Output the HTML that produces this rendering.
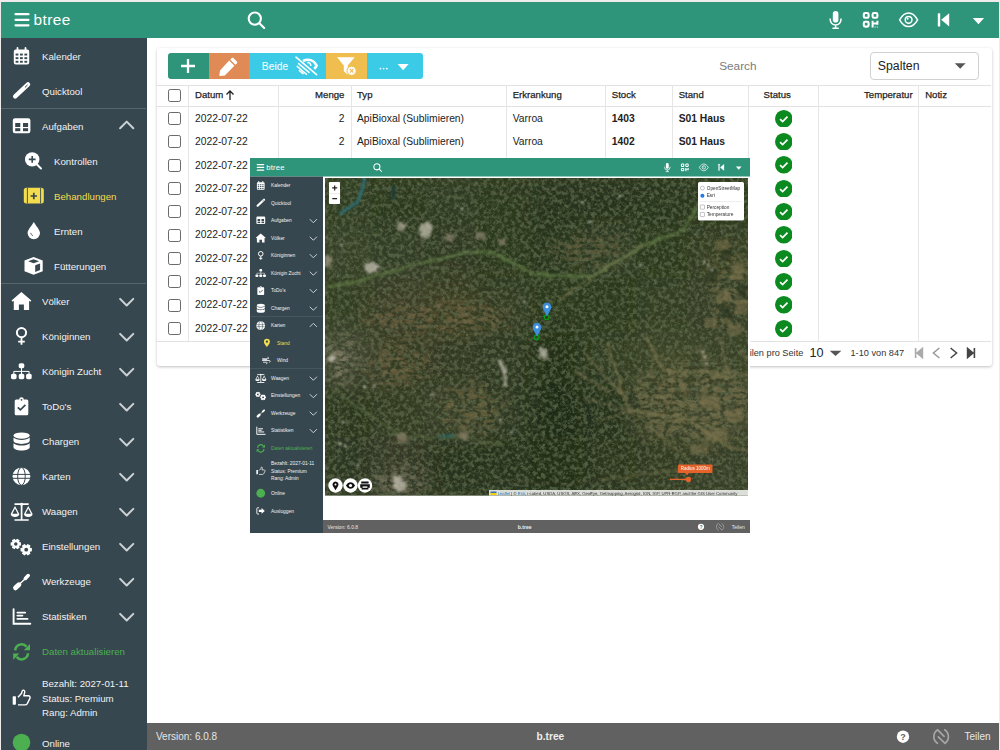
<!DOCTYPE html>
<html><head><meta charset="utf-8">
<style>
*{box-sizing:border-box}
html,body{margin:0;padding:0}
body{width:1000px;height:750px;overflow:hidden;background:#efebeb;position:relative;font-family:"Liberation Sans",sans-serif}
.app{position:absolute;overflow:hidden;background:#fff}
.top{position:absolute;left:0;top:0;width:100%;background:#2e957b}
.side{position:absolute;left:0;background:#37474f;overflow:hidden}
.ssvg{position:absolute;left:0;top:0}
.sl{position:absolute;font-size:9.7px;line-height:14px;white-space:nowrap}
.sdiv{position:absolute;left:0;width:100%;height:1px;background:#56666d}
.tsvg{position:absolute;left:0;top:0}
.brand{position:absolute;left:33.4px;top:11.3px;font-size:15.4px;letter-spacing:.45px;color:#fff;line-height:18px}
.foot{position:absolute;left:146px;right:0;background:#616161;color:#eee}
.card{position:absolute;left:155.5px;top:46.5px;width:835px;height:318px;background:#fff;border-radius:3px;box-shadow:0 1px 3px rgba(0,0,0,.25)}
.hl{position:absolute;left:156px;width:834.5px;height:1px;background:#e2e2e2}
.vl{position:absolute;top:85px;width:1px;height:256px;background:#e6e6e6}
.cb{position:absolute;width:13px;height:13px;border:1.6px solid #6a6a6a;border-radius:2.2px}
.th{position:absolute;font-size:9.6px;line-height:12px;color:#1e1e1e;white-space:nowrap;-webkit-text-stroke:.25px #1e1e1e}
.td{position:absolute;font-size:10.3px;line-height:13px;color:#222;white-space:nowrap}
.td.b{font-weight:bold}
.btn{position:absolute;top:52.8px;height:26px}
.bt{position:absolute;font-size:10.3px;color:#fff;line-height:12px}
.pg{position:absolute;font-size:9.2px;color:#333;line-height:12px;white-space:nowrap}
.map{position:absolute;left:0;top:0;width:1000px;height:750px}
.lc{position:absolute;font-size:9.5px;line-height:12px;color:#333;white-space:nowrap}
</style></head><body>
<div class="app" style="left:1px;top:1.5px;width:998px;height:748.5px">
  <div class="card"></div>
</div>
<div style="position:absolute;left:0;top:0;width:1000px;height:750px">
  <div class="btn" style="left:167.8px;width:40.9px;background:#2e957b;border-radius:3px 0 0 3px"></div><div class="btn" style="left:208.7px;width:40.5px;background:#e08b55"></div><div class="btn" style="left:249.2px;width:77px;background:#3ccbe7"></div><div class="btn" style="left:326.2px;width:40.9px;background:#f0bd4f"></div><div class="btn" style="left:367.1px;width:55.8px;background:#3ccbe7;border-radius:0 3px 3px 0"></div><svg style="position:absolute;left:0;top:0" width="1000" height="90" viewBox="0 0 1000 90"><path d="M188 59v14M181 66h14" stroke="#fff" stroke-width="2.3"/><path fill="#fff" d="M233.6 58.2l3.2 3.2c.6.6.6 1.4 0 2l-1.4 1.4-5.2-5.2 1.4-1.4c.6-.6 1.4-.6 2 0zM229.2 60.6l5.2 5.2-9.6 9.6-4.8.6c-.4 0-.6-.2-.6-.6l.6-4.8z"/><path d="M296 57.2l20.6 17.4" stroke="#fff" stroke-width="1.6" stroke-linecap="round"/><path d="M303 61c1.5-.8 3.2-1.2 5-1.2 3.6 0 6.8 2.2 8.6 5.8-.6 1.3-1.4 2.4-2.4 3.3" stroke="#fff" stroke-width="2.6" fill="none"/><path d="M307.4 62.6a3 3 0 0 1 3.4 3.4" stroke="#fff" stroke-width="1.6" fill="none"/><path d="M298.6 63.6l10.4 8.8M297.2 66.4l9.2 7.8M299.4 70.6l3.6 3" stroke="#fff" stroke-width="1.5" stroke-linecap="round"/><path fill="#fff" d="M337 57.2h17.6l-6.8 8.2v9.4l-4-3.5v-5.9z"/><circle cx="351.6" cy="70.8" r="4.6" fill="#fff" stroke="#f0bd4f" stroke-width="1"/><path d="M349.8 69l3.6 3.6M353.4 69l-3.6 3.6" stroke="#f0bd4f" stroke-width="1.1"/><circle cx="380.4" cy="68.6" r=".9" fill="#fff"/><circle cx="383.6" cy="68.6" r=".9" fill="#fff"/><circle cx="386.8" cy="68.6" r=".9" fill="#fff"/><path fill="#fff" d="M397.6 63.9h11l-5.5 6.4z"/></svg><div class="bt" style="left:261.8px;top:60.5px">Beide</div><div style="position:absolute;left:719.2px;top:58.5px;font-size:11.8px;color:#7a7a7a">Search</div><div style="position:absolute;left:869.6px;top:51.5px;width:109px;height:28.5px;border:1px solid #d0d0d0;border-radius:4px"></div><div style="position:absolute;left:877.8px;top:59px;font-size:12.3px;color:#222">Spalten</div><svg style="position:absolute;left:0;top:0" width="1000" height="90"><path fill="#555" d="M954.8 63.2h10.8l-5.4 5.6z"/></svg>
  <div class="hl" style="top:85px"></div><div class="hl" style="top:106px"></div><div class="hl" style="top:340.5px"></div><div class="vl" style="left:188px"></div><div class="vl" style="left:278px"></div><div class="vl" style="left:351px"></div><div class="vl" style="left:506px"></div><div class="vl" style="left:605px"></div><div class="vl" style="left:672px"></div><div class="vl" style="left:748px"></div><div class="vl" style="left:818px"></div><div class="vl" style="left:918px"></div><div class="cb" style="left:168.4px;top:89.4px"></div><div class="th" style="left:195px;top:89px">Datum</div><div class="th" style="right:655.6px;top:89px">Menge</div><div class="th" style="left:357px;top:89px">Typ</div><div class="th" style="left:512.7px;top:89px">Erkrankung</div><div class="th" style="left:611.8px;top:89px">Stock</div><div class="th" style="left:678.7px;top:89px">Stand</div><div class="th" style="left:737.2px;width:80px;text-align:center;top:89px">Status</div><div class="th" style="right:87.39999999999998px;top:89px">Temperatur</div><div class="th" style="left:925.2px;top:89px">Notiz</div><svg style="position:absolute;left:224.5px;top:89px" width="10" height="12" viewBox="0 0 10 12"><path d="M5 2v9M1.5 5.5L5 2l3.5 3.5" stroke="#222" stroke-width="1.3" fill="none"/></svg><div class="cb" style="left:168.4px;top:112.1px"></div><div class="td" style="left:195px;top:111.8px">2022-07-22</div><div class="td" style="right:655.6px;top:111.8px">2</div><div class="td" style="left:357px;top:111.8px">ApiBioxal (Sublimieren)</div><div class="td" style="left:512.7px;top:111.8px">Varroa</div><div class="td b" style="left:611.8px;top:111.8px">1403</div><div class="td b" style="left:678.7px;top:111.8px">S01 Haus</div><svg style="position:absolute;left:774.8px;top:109.5px" width="17.6" height="17.6" viewBox="0 0 18 18"><circle cx="9" cy="9" r="9" fill="#0b8a1f"/><path d="M5.2 9.3l2.6 2.5 5-5" stroke="#fff" stroke-width="1.8" fill="none"/></svg><div class="cb" style="left:168.4px;top:135.4px"></div><div class="td" style="left:195px;top:135.1px">2022-07-22</div><div class="td" style="right:655.6px;top:135.1px">2</div><div class="td" style="left:357px;top:135.1px">ApiBioxal (Sublimieren)</div><div class="td" style="left:512.7px;top:135.1px">Varroa</div><div class="td b" style="left:611.8px;top:135.1px">1402</div><div class="td b" style="left:678.7px;top:135.1px">S01 Haus</div><svg style="position:absolute;left:774.8px;top:132.8px" width="17.6" height="17.6" viewBox="0 0 18 18"><circle cx="9" cy="9" r="9" fill="#0b8a1f"/><path d="M5.2 9.3l2.6 2.5 5-5" stroke="#fff" stroke-width="1.8" fill="none"/></svg><div class="cb" style="left:168.4px;top:158.8px"></div><div class="td" style="left:195px;top:158.5px">2022-07-22</div><div class="td" style="right:655.6px;top:158.5px">2</div><div class="td" style="left:357px;top:158.5px">ApiBioxal (Sublimieren)</div><div class="td" style="left:512.7px;top:158.5px">Varroa</div><div class="td b" style="left:611.8px;top:158.5px">1401</div><div class="td b" style="left:678.7px;top:158.5px">S01 Haus</div><svg style="position:absolute;left:774.8px;top:156.2px" width="17.6" height="17.6" viewBox="0 0 18 18"><circle cx="9" cy="9" r="9" fill="#0b8a1f"/><path d="M5.2 9.3l2.6 2.5 5-5" stroke="#fff" stroke-width="1.8" fill="none"/></svg><div class="cb" style="left:168.4px;top:182.1px"></div><div class="td" style="left:195px;top:181.8px">2022-07-22</div><div class="td" style="right:655.6px;top:181.8px">2</div><div class="td" style="left:357px;top:181.8px">ApiBioxal (Sublimieren)</div><div class="td" style="left:512.7px;top:181.8px">Varroa</div><div class="td b" style="left:611.8px;top:181.8px">1400</div><div class="td b" style="left:678.7px;top:181.8px">S01 Haus</div><svg style="position:absolute;left:774.8px;top:179.5px" width="17.6" height="17.6" viewBox="0 0 18 18"><circle cx="9" cy="9" r="9" fill="#0b8a1f"/><path d="M5.2 9.3l2.6 2.5 5-5" stroke="#fff" stroke-width="1.8" fill="none"/></svg><div class="cb" style="left:168.4px;top:205.4px"></div><div class="td" style="left:195px;top:205.1px">2022-07-22</div><div class="td" style="right:655.6px;top:205.1px">2</div><div class="td" style="left:357px;top:205.1px">ApiBioxal (Sublimieren)</div><div class="td" style="left:512.7px;top:205.1px">Varroa</div><div class="td b" style="left:611.8px;top:205.1px">1399</div><div class="td b" style="left:678.7px;top:205.1px">S01 Haus</div><svg style="position:absolute;left:774.8px;top:202.8px" width="17.6" height="17.6" viewBox="0 0 18 18"><circle cx="9" cy="9" r="9" fill="#0b8a1f"/><path d="M5.2 9.3l2.6 2.5 5-5" stroke="#fff" stroke-width="1.8" fill="none"/></svg><div class="cb" style="left:168.4px;top:228.8px"></div><div class="td" style="left:195px;top:228.4px">2022-07-22</div><div class="td" style="right:655.6px;top:228.4px">2</div><div class="td" style="left:357px;top:228.4px">ApiBioxal (Sublimieren)</div><div class="td" style="left:512.7px;top:228.4px">Varroa</div><div class="td b" style="left:611.8px;top:228.4px">1398</div><div class="td b" style="left:678.7px;top:228.4px">S01 Haus</div><svg style="position:absolute;left:774.8px;top:226.1px" width="17.6" height="17.6" viewBox="0 0 18 18"><circle cx="9" cy="9" r="9" fill="#0b8a1f"/><path d="M5.2 9.3l2.6 2.5 5-5" stroke="#fff" stroke-width="1.8" fill="none"/></svg><div class="cb" style="left:168.4px;top:252.1px"></div><div class="td" style="left:195px;top:251.8px">2022-07-22</div><div class="td" style="right:655.6px;top:251.8px">2</div><div class="td" style="left:357px;top:251.8px">ApiBioxal (Sublimieren)</div><div class="td" style="left:512.7px;top:251.8px">Varroa</div><div class="td b" style="left:611.8px;top:251.8px">1397</div><div class="td b" style="left:678.7px;top:251.8px">S01 Haus</div><svg style="position:absolute;left:774.8px;top:249.5px" width="17.6" height="17.6" viewBox="0 0 18 18"><circle cx="9" cy="9" r="9" fill="#0b8a1f"/><path d="M5.2 9.3l2.6 2.5 5-5" stroke="#fff" stroke-width="1.8" fill="none"/></svg><div class="cb" style="left:168.4px;top:275.4px"></div><div class="td" style="left:195px;top:275.1px">2022-07-22</div><div class="td" style="right:655.6px;top:275.1px">2</div><div class="td" style="left:357px;top:275.1px">ApiBioxal (Sublimieren)</div><div class="td" style="left:512.7px;top:275.1px">Varroa</div><div class="td b" style="left:611.8px;top:275.1px">1396</div><div class="td b" style="left:678.7px;top:275.1px">S01 Haus</div><svg style="position:absolute;left:774.8px;top:272.8px" width="17.6" height="17.6" viewBox="0 0 18 18"><circle cx="9" cy="9" r="9" fill="#0b8a1f"/><path d="M5.2 9.3l2.6 2.5 5-5" stroke="#fff" stroke-width="1.8" fill="none"/></svg><div class="cb" style="left:168.4px;top:298.7px"></div><div class="td" style="left:195px;top:298.4px">2022-07-22</div><div class="td" style="right:655.6px;top:298.4px">2</div><div class="td" style="left:357px;top:298.4px">ApiBioxal (Sublimieren)</div><div class="td" style="left:512.7px;top:298.4px">Varroa</div><div class="td b" style="left:611.8px;top:298.4px">1395</div><div class="td b" style="left:678.7px;top:298.4px">S01 Haus</div><svg style="position:absolute;left:774.8px;top:296.1px" width="17.6" height="17.6" viewBox="0 0 18 18"><circle cx="9" cy="9" r="9" fill="#0b8a1f"/><path d="M5.2 9.3l2.6 2.5 5-5" stroke="#fff" stroke-width="1.8" fill="none"/></svg><div class="cb" style="left:168.4px;top:322.1px"></div><div class="td" style="left:195px;top:321.8px">2022-07-22</div><div class="td" style="right:655.6px;top:321.8px">2</div><div class="td" style="left:357px;top:321.8px">ApiBioxal (Sublimieren)</div><div class="td" style="left:512.7px;top:321.8px">Varroa</div><div class="td b" style="left:611.8px;top:321.8px">1394</div><div class="td b" style="left:678.7px;top:321.8px">S01 Haus</div><svg style="position:absolute;left:774.8px;top:319.5px" width="17.6" height="17.6" viewBox="0 0 18 18"><circle cx="9" cy="9" r="9" fill="#0b8a1f"/><path d="M5.2 9.3l2.6 2.5 5-5" stroke="#fff" stroke-width="1.8" fill="none"/></svg>
  <div class="pg" style="right:196.7px;top:347px">Zeilen pro Seite</div><div style="position:absolute;left:809.6px;top:345.6px;font-size:12.6px;color:#222;line-height:15px">10</div><svg style="position:absolute;left:0;top:330px" width="1000" height="40" viewBox="0 330 1000 40"><path fill="#555" d="M829.7 350.8h11.7l-5.85 5.2z"/><path d="M915.6 348v10M922.4 348.4v9.2l-5.4-4.6z" stroke="#aaa" stroke-width="1.6" fill="#aaa"/><path d="M939.4 348l-6 5 6 5" stroke="#999" stroke-width="1.5" fill="none"/><path d="M950.6 348l6 5-6 5" stroke="#444" stroke-width="1.5" fill="none"/><path d="M974.4 348v10M967.6 348.4v9.2l5.4-4.6z" stroke="#444" stroke-width="1.6" fill="#444"/></svg><div class="pg" style="left:850.5px;top:347px">1-10 von 847</div>
</div>
<div class="top" style="left:1px;top:1.5px;width:998px;height:36.5px"></div>
<div style="position:absolute;left:0;top:0;width:1000px;height:40px"><svg class="tsvg" width="1000" height="40" viewBox="0 0 1000 40"><path d="M15.5 14.2h13M15.5 19.8h13M15.5 25.3h13" stroke="#fff" stroke-width="2.2" stroke-linecap="round"/><circle cx="254.8" cy="18.6" r="6.1" stroke="#fff" stroke-width="2.1" fill="none"/><path d="M259.4 23.2l4.8 4.8" stroke="#fff" stroke-width="2.1" stroke-linecap="round"/><rect x="832.8" y="11" width="5.6" height="11.6" rx="2.8" fill="#fff"/><path d="M830.2 18.4v1.2a5.4 5.4 0 0 0 10.8 0v-1.2M835.6 25v2.8M832.4 28.2h6.4" stroke="#fff" stroke-width="1.5" fill="none"/><rect x="863.8" y="13" width="4.8" height="4.8" rx="1.4" stroke="#fff" stroke-width="2.1" fill="none"/><rect x="872.6" y="13" width="4.8" height="4.8" rx="1.4" stroke="#fff" stroke-width="2.1" fill="none"/><rect x="863.8" y="21.8" width="4.8" height="4.8" rx="1.4" stroke="#fff" stroke-width="2.1" fill="none"/><path fill="#fff" d="M871.6 20.8h2v6.8h-2zM876.4 20.8h2v4h-2zM873.6 22.4h2.8v2h-2.8zM874.6 26.6h1v1h-1zM876.8 26.6h1v1h-1z"/><path d="M899.6 19.8c2.6-4.6 6.2-6.8 9-6.8s6.4 2.2 9 6.8c-2.6 4.6-6.2 6.8-9 6.8s-6.4-2.2-9-6.8z" stroke="#fff" stroke-width="1.5" fill="none"/><circle cx="908.6" cy="19.8" r="3.4" stroke="#fff" stroke-width="1.5" fill="none"/><circle cx="907.6" cy="18.8" r="1" fill="#fff"/><rect x="937.8" y="13.2" width="2.4" height="13.2" rx=".5" fill="#fff"/><path fill="#fff" d="M949.2 13.2v13.2l-8-6.6z"/><path fill="#fff" d="M972.8 17.9h11.3l-5.65 6.4z"/></svg><div class="brand">btree</div></div>
<div class="side" style="left:1px;top:38px;width:146px;height:712px">
  <div style="position:absolute;left:-1px;top:-38px;width:146px;height:760px"><svg class="ssvg" width="146" height="760" viewBox="0 0 146 760"><g transform="translate(10 43)"><path fill="#fff" d="M5.8 6.5h11.4a2 2 0 0 1 2 2v11.1a2 2 0 0 1-2 2H5.8a2 2 0 0 1-2-2V8.5a2 2 0 0 1 2-2z"/><rect x="6.6" y="4" width="1.8" height="4" rx=".9" fill="#fff"/><rect x="14.6" y="4" width="1.8" height="4" rx=".9" fill="#fff"/><rect x="5.6" y="10.6" width="2.8" height="1.9" fill="#37474f"/><rect x="10.0" y="10.6" width="2.8" height="1.9" fill="#37474f"/><rect x="14.4" y="10.6" width="2.8" height="1.9" fill="#37474f"/><rect x="5.6" y="14.2" width="2.8" height="1.9" fill="#37474f"/><rect x="10.0" y="14.2" width="2.8" height="1.9" fill="#37474f"/><rect x="14.4" y="14.2" width="2.8" height="1.9" fill="#37474f"/><rect x="5.6" y="17.8" width="2.8" height="1.9" fill="#37474f"/><rect x="10.0" y="17.8" width="2.8" height="1.9" fill="#37474f"/><rect x="14.4" y="17.8" width="2.8" height="1.9" fill="#37474f"/></g><g transform="translate(10 78)"><line x1="5.2" y1="18.4" x2="18" y2="6.4" stroke="#fff" stroke-width="4.4" stroke-linecap="round"/><line x1="15.2" y1="9.2" x2="17.3" y2="7.2" stroke="#37474f" stroke-width="1" stroke-linecap="round"/></g><g transform="translate(10 113)"><rect x="2.8" y="5.2" width="17.6" height="15" rx="2.2" fill="#fff"/><rect x="5.2" y="10" width="5.1" height="4" fill="#37474f"/><rect x="13" y="10" width="5.1" height="4" fill="#37474f"/><rect x="5.2" y="15.2" width="5.1" height="3" fill="#37474f"/><rect x="13" y="15.2" width="5.1" height="3" fill="#37474f"/></g><path d="M120.1 128.2l6.6-6.6 6.6 6.6" stroke="#cdd2d5" stroke-width="2" fill="none" stroke-linecap="round" stroke-linejoin="round"/><g transform="translate(10 148)"><line x1="26.5" y1="16" x2="31" y2="20.5" stroke="#fff" stroke-width="2" stroke-linecap="round"/><circle cx="22.2" cy="11.4" r="7.2" fill="#fff"/><path d="M22.2 8v6.8M18.8 11.4h6.8" stroke="#37474f" stroke-width="1.6"/></g><g transform="translate(10 183)"><rect x="13.8" y="4.8" width="20" height="15.6" rx="2.5" fill="#f3dc4e"/><path d="M17.4 4.8v15.6M30.6 4.8v15.6" stroke="#37474f" stroke-width="0.9"/><path d="M23.8 9.8v6.4M20.6 13h6.4" stroke="#37474f" stroke-width="1.7"/></g><g transform="translate(10 218)"><path fill="#fff" d="M23.8 3.9C22 7.5 17.6 11.5 17.6 15a6.2 6.2 0 0 0 12.4 0c0-3.5-4.4-7.5-6.2-11.1z"/><path d="M20.7 14.8a3.4 3.4 0 0 0 2.3 2.9" stroke="#37474f" stroke-width=".8" fill="none"/></g><g transform="translate(10 253)"><path fill="#fff" d="M23.6 4l9.1 3.4v10.8l-9.1 3.5-9.1-3.5V7.4z"/><path fill="#37474f" d="M23.6 6.2l5.5 2-5.5 2-5.5-2z"/><path fill="#37474f" d="M25.2 12.2l4.9-1.8v6.7l-4.9 1.9z"/></g><g transform="translate(10 288)"><path fill="#fff" d="M11.4 3.9l9.9 8.6-1 1.2-1.2-1V22h-5.2v-5.6h-5v5.6H3.8V12.7l-1.2 1-1-1.2z"/></g><path d="M120.1 298.9l6.6 6.6 6.6-6.6" stroke="#cdd2d5" stroke-width="2" fill="none" stroke-linecap="round" stroke-linejoin="round"/><g transform="translate(10 323)"><circle cx="11.5" cy="9.6" r="4.6" stroke="#fff" stroke-width="2" fill="none"/><path d="M11.5 14.2v7.5M8.2 18.6h6.6" stroke="#fff" stroke-width="1.8"/></g><path d="M120.1 333.9l6.6 6.6 6.6-6.6" stroke="#cdd2d5" stroke-width="2" fill="none" stroke-linecap="round" stroke-linejoin="round"/><g transform="translate(10 358)"><rect x="8.7" y="5.2" width="5.6" height="5" rx="1.6" fill="#fff"/><rect x="1" y="15.8" width="5.6" height="5.4" rx="1.6" fill="#fff"/><rect x="8.7" y="15.8" width="5.6" height="5.4" rx="1.6" fill="#fff"/><rect x="16.1" y="15.8" width="5.6" height="5.4" rx="1.6" fill="#fff"/><path d="M11.5 10v6M3.8 16v-2.6h15.3V16" stroke="#fff" stroke-width="1" fill="none"/></g><path d="M120.1 368.9l6.6 6.6 6.6-6.6" stroke="#cdd2d5" stroke-width="2" fill="none" stroke-linecap="round" stroke-linejoin="round"/><g transform="translate(10 393)"><path fill="#fff" d="M6.2 6.6h3a2.3 2.3 0 0 1 4.6 0h3a1.5 1.5 0 0 1 1.5 1.5v12.6a1.5 1.5 0 0 1-1.5 1.5H6.2a1.5 1.5 0 0 1-1.5-1.5V8.1a1.5 1.5 0 0 1 1.5-1.5z"/><circle cx="11.5" cy="6.8" r=".9" fill="#37474f"/><path d="M7.8 14.4l2.6 2.5 5-5" stroke="#37474f" stroke-width="1.7" fill="none"/></g><path d="M120.1 403.9l6.6 6.6 6.6-6.6" stroke="#cdd2d5" stroke-width="2" fill="none" stroke-linecap="round" stroke-linejoin="round"/><g transform="translate(10 428)"><ellipse cx="11.6" cy="7.6" rx="8.1" ry="3.2" fill="#fff"/><path fill="#fff" d="M3.5 9.6c1.6 1.6 4.6 2.4 8.1 2.4s6.5-.8 8.1-2.4v3.2c0 1.7-3.6 3.1-8.1 3.1s-8.1-1.4-8.1-3.1z"/><path fill="#fff" d="M3.5 15.2c1.6 1.6 4.6 2.4 8.1 2.4s6.5-.8 8.1-2.4v4.1c0 1.8-3.6 3.2-8.1 3.2s-8.1-1.4-8.1-3.2z"/></g><path d="M120.1 438.9l6.6 6.6 6.6-6.6" stroke="#cdd2d5" stroke-width="2" fill="none" stroke-linecap="round" stroke-linejoin="round"/><g transform="translate(10 463)"><circle cx="11.45" cy="13.3" r="8.85" fill="#fff"/><path d="M2.6 11.4h17.7M2.6 15.3h17.7" stroke="#37474f" stroke-width="1"/><ellipse cx="11.45" cy="13.3" rx="3.8" ry="8.85" stroke="#37474f" stroke-width="1" fill="none"/></g><path d="M120.1 473.9l6.6 6.6 6.6-6.6" stroke="#cdd2d5" stroke-width="2" fill="none" stroke-linecap="round" stroke-linejoin="round"/><g transform="translate(10 498)"><path d="M11.6 6v15.6M4.5 6.2h14.2M4.5 22h14.2" stroke="#fff" stroke-width="1.7"/><circle cx="11.6" cy="6.2" r="1.5" fill="#fff"/><path fill="#fff" d="M5 8l-4.3 8c0 2 2 3 4.3 3s4.3-1 4.3-3zm0 2.4l2.7 5.3H2.3z"/><path fill="#fff" d="M18.3 8l-4.3 8c0 2 2 3 4.3 3s4.3-1 4.3-3zm0 2.4l2.7 5.3h-5.4z"/></g><path d="M120.1 508.9l6.6 6.6 6.6-6.6" stroke="#cdd2d5" stroke-width="2" fill="none" stroke-linecap="round" stroke-linejoin="round"/><g transform="translate(10 533)"><path fill="#fff" d="M10.99 9.41 L10.99 12.39 L9.21 12.76 L9.12 12.92 L9.69 14.65 L7.10 16.14 L5.89 14.79 L5.71 14.79 L4.50 16.14 L1.91 14.65 L2.48 12.92 L2.39 12.76 L0.61 12.39 L0.61 9.41 L2.39 9.04 L2.48 8.88 L1.91 7.15 L4.50 5.66 L5.71 7.01 L5.89 7.01 L7.10 5.66 L9.69 7.15 L9.12 8.88 L9.21 9.04Z"/><circle cx="5.8" cy="10.9" r="1.73" fill="#37474f"/><path fill="#fff" d="M21.87 15.07 L21.87 18.33 L19.93 18.74 L19.83 18.91 L20.45 20.80 L17.62 22.43 L16.30 20.95 L16.10 20.95 L14.78 22.43 L11.95 20.80 L12.57 18.91 L12.47 18.74 L10.53 18.33 L10.53 15.07 L12.47 14.66 L12.57 14.49 L11.95 12.60 L14.78 10.97 L16.10 12.45 L16.30 12.45 L17.62 10.97 L20.45 12.60 L19.83 14.49 L19.93 14.66Z"/><circle cx="16.2" cy="16.7" r="1.89" fill="#37474f"/></g><path d="M120.1 543.9l6.6 6.6 6.6-6.6" stroke="#cdd2d5" stroke-width="2" fill="none" stroke-linecap="round" stroke-linejoin="round"/><g transform="translate(10 568)"><line x1="5.6" y1="19.8" x2="8.8" y2="16.8" stroke="#fff" stroke-width="5" stroke-linecap="round"/><line x1="8.8" y1="16.8" x2="15.2" y2="10.8" stroke="#fff" stroke-width="1.4"/><line x1="15.4" y1="10.4" x2="18.2" y2="7.6" stroke="#fff" stroke-width="3.6" stroke-linecap="round"/></g><path d="M120.1 578.9l6.6 6.6 6.6-6.6" stroke="#cdd2d5" stroke-width="2" fill="none" stroke-linecap="round" stroke-linejoin="round"/><g transform="translate(10 603)"><path d="M3.6 6.2v14.5h16.7" stroke="#fff" stroke-width="1.9" fill="none" stroke-linecap="round"/><path d="M7.4 9.6h7.8M7.4 12.6h5M7.4 15.9h10.1" stroke="#fff" stroke-width="1.9" stroke-linecap="round"/></g><path d="M120.1 613.9l6.6 6.6 6.6-6.6" stroke="#cdd2d5" stroke-width="2" fill="none" stroke-linecap="round" stroke-linejoin="round"/><g transform="translate(10 638)"><path d="M5.2 12.4a6.4 6.4 0 0 1 11.4-3.6" stroke="#4caf50" stroke-width="2.5" fill="none"/><path fill="#4caf50" d="M20 6v6.2h-6.2z"/><path d="M18 15.3a6.4 6.4 0 0 1-11.4 3.6" stroke="#4caf50" stroke-width="2.5" fill="none"/><path fill="#4caf50" d="M3.2 21.7v-6.2h6.2z"/></g><g transform="translate(10 685)"><rect x="2.7" y="11.2" width="3.2" height="8.5" rx=".6" fill="#fff"/><path d="M8 12.2l3.4-3.6c.6-.9.4-2.6 1.4-3.3 1.3-.5 2.2.7 1.9 2l-.9 3.5h4.5c1.5 0 2.2 1.5 1.6 2.6l-2.6 5.2c-.5.9-1.2 1.3-2.2 1.3H8" stroke="#fff" stroke-width="1.4" fill="none" stroke-linejoin="round"/></g><g transform="translate(10 730)"><circle cx="11.5" cy="12.5" r="8.8" fill="#4caf50"/></g></svg><div class="sl" style="left:42px;top:49.5px;color:#f2f2f2">Kalender</div><div class="sl" style="left:42px;top:84.5px;color:#f2f2f2">Quicktool</div><div class="sl" style="left:42px;top:119.5px;color:#f2f2f2">Aufgaben</div><div class="sl" style="left:54px;top:154.5px;color:#f2f2f2">Kontrollen</div><div class="sl" style="left:54px;top:189.5px;color:#f3dc4e">Behandlungen</div><div class="sl" style="left:54px;top:224.5px;color:#f2f2f2">Ernten</div><div class="sl" style="left:54px;top:259.5px;color:#f2f2f2">Fütterungen</div><div class="sl" style="left:42px;top:294.5px;color:#f2f2f2">Völker</div><div class="sl" style="left:42px;top:329.5px;color:#f2f2f2">Königinnen</div><div class="sl" style="left:42px;top:364.5px;color:#f2f2f2">Königin Zucht</div><div class="sl" style="left:42px;top:399.5px;color:#f2f2f2">ToDo's</div><div class="sl" style="left:42px;top:434.5px;color:#f2f2f2">Chargen</div><div class="sl" style="left:42px;top:469.5px;color:#f2f2f2">Karten</div><div class="sl" style="left:42px;top:504.5px;color:#f2f2f2">Waagen</div><div class="sl" style="left:42px;top:539.5px;color:#f2f2f2">Einstellungen</div><div class="sl" style="left:42px;top:574.5px;color:#f2f2f2">Werkzeuge</div><div class="sl" style="left:42px;top:609.5px;color:#f2f2f2">Statistiken</div><div class="sl" style="left:42px;top:644.5px;color:#4caf50">Daten aktualisieren</div><div class="sl" style="left:42px;top:676.7px;color:#f2f2f2">Bezahlt: 2027-01-11</div><div class="sl" style="left:42px;top:691.5px;color:#f2f2f2">Status: Premium</div><div class="sl" style="left:42px;top:706.3px;color:#f2f2f2">Rang: Admin</div><div class="sl" style="left:42px;top:736.5px;color:#f2f2f2">Online</div><div class="sdiv" style="top:108px"></div><div class="sdiv" style="top:283px"></div></div>
</div>
<div class="foot" style="top:723px;height:27px;left:147px;width:852px"><div style="position:absolute;left:9px;top:7.9px;font-size:10px;color:#e6e6e6;line-height:12px">Version: 6.0.8</div><div style="position:absolute;left:389.5px;top:7.9px;font-size:10.2px;font-weight:bold;color:#eee;line-height:12px">b.tree</div><svg style="position:absolute;left:0;top:0" width="852" height="27" viewBox="0 0 852 27"><circle cx="756" cy="13.7" r="6.2" fill="#fff"/><text x="756" y="17.1" font-size="9" font-weight="bold" text-anchor="middle" fill="#616161" font-family="Liberation Sans">?</text><path d="M790.4 20.3C785.6 16.8 785.6 10.1 790.7 6.8L797.1 13.3M797.7 6.8C802.6 10.1 802.6 16.8 798 20.3L791.3 13.9" stroke="#a6a6a6" stroke-width="1.7" fill="none" stroke-linecap="round" stroke-linejoin="round"/></svg><div style="position:absolute;left:817.4px;top:7.9px;font-size:10px;color:#e6e6e6;line-height:12px">Teilen</div></div>
<!-- embedded screenshot -->
<div style="position:absolute;left:250px;top:158px;width:500px;height:375px;overflow:hidden">
 <div style="position:absolute;left:0;top:0;width:1000px;height:750px;transform:scale(.5);transform-origin:0 0;background:#fff">
  <div class="top" style="height:37px"></div>
  <div style="position:absolute;left:-1px;top:-1.5px;width:1000px;height:40px"><svg class="tsvg" width="1000" height="40" viewBox="0 0 1000 40"><path d="M15.5 14.2h13M15.5 19.8h13M15.5 25.3h13" stroke="#fff" stroke-width="2.2" stroke-linecap="round"/><circle cx="254.8" cy="18.6" r="6.1" stroke="#fff" stroke-width="2.1" fill="none"/><path d="M259.4 23.2l4.8 4.8" stroke="#fff" stroke-width="2.1" stroke-linecap="round"/><rect x="832.8" y="11" width="5.6" height="11.6" rx="2.8" fill="#fff"/><path d="M830.2 18.4v1.2a5.4 5.4 0 0 0 10.8 0v-1.2M835.6 25v2.8M832.4 28.2h6.4" stroke="#fff" stroke-width="1.5" fill="none"/><rect x="863.8" y="13" width="4.8" height="4.8" rx="1.4" stroke="#fff" stroke-width="2.1" fill="none"/><rect x="872.6" y="13" width="4.8" height="4.8" rx="1.4" stroke="#fff" stroke-width="2.1" fill="none"/><rect x="863.8" y="21.8" width="4.8" height="4.8" rx="1.4" stroke="#fff" stroke-width="2.1" fill="none"/><path fill="#fff" d="M871.6 20.8h2v6.8h-2zM876.4 20.8h2v4h-2zM873.6 22.4h2.8v2h-2.8zM874.6 26.6h1v1h-1zM876.8 26.6h1v1h-1z"/><path d="M899.6 19.8c2.6-4.6 6.2-6.8 9-6.8s6.4 2.2 9 6.8c-2.6 4.6-6.2 6.8-9 6.8s-6.4-2.2-9-6.8z" stroke="#fff" stroke-width="1.5" fill="none"/><circle cx="908.6" cy="19.8" r="3.4" stroke="#fff" stroke-width="1.5" fill="none"/><circle cx="907.6" cy="18.8" r="1" fill="#fff"/><rect x="937.8" y="13.2" width="2.4" height="13.2" rx=".5" fill="#fff"/><path fill="#fff" d="M949.2 13.2v13.2l-8-6.6z"/><path fill="#fff" d="M972.8 17.9h11.3l-5.65 6.4z"/></svg><div class="brand">btree</div></div>
  <div class="side" style="left:0;top:37px;width:146px;height:713px">
    <div style="position:absolute;left:0;top:-38.5px;width:146px;height:760px"><svg class="ssvg" width="146" height="760" viewBox="0 0 146 760"><g transform="translate(10 43)"><path fill="#fff" d="M5.8 6.5h11.4a2 2 0 0 1 2 2v11.1a2 2 0 0 1-2 2H5.8a2 2 0 0 1-2-2V8.5a2 2 0 0 1 2-2z"/><rect x="6.6" y="4" width="1.8" height="4" rx=".9" fill="#fff"/><rect x="14.6" y="4" width="1.8" height="4" rx=".9" fill="#fff"/><rect x="5.6" y="10.6" width="2.8" height="1.9" fill="#37474f"/><rect x="10.0" y="10.6" width="2.8" height="1.9" fill="#37474f"/><rect x="14.4" y="10.6" width="2.8" height="1.9" fill="#37474f"/><rect x="5.6" y="14.2" width="2.8" height="1.9" fill="#37474f"/><rect x="10.0" y="14.2" width="2.8" height="1.9" fill="#37474f"/><rect x="14.4" y="14.2" width="2.8" height="1.9" fill="#37474f"/><rect x="5.6" y="17.8" width="2.8" height="1.9" fill="#37474f"/><rect x="10.0" y="17.8" width="2.8" height="1.9" fill="#37474f"/><rect x="14.4" y="17.8" width="2.8" height="1.9" fill="#37474f"/></g><g transform="translate(10 78)"><line x1="5.2" y1="18.4" x2="18" y2="6.4" stroke="#fff" stroke-width="4.4" stroke-linecap="round"/><line x1="15.2" y1="9.2" x2="17.3" y2="7.2" stroke="#37474f" stroke-width="1" stroke-linecap="round"/></g><g transform="translate(10 113)"><rect x="2.8" y="5.2" width="17.6" height="15" rx="2.2" fill="#fff"/><rect x="5.2" y="10" width="5.1" height="4" fill="#37474f"/><rect x="13" y="10" width="5.1" height="4" fill="#37474f"/><rect x="5.2" y="15.2" width="5.1" height="3" fill="#37474f"/><rect x="13" y="15.2" width="5.1" height="3" fill="#37474f"/></g><path d="M120.1 123.9l6.6 6.6 6.6-6.6" stroke="#cdd2d5" stroke-width="2" fill="none" stroke-linecap="round" stroke-linejoin="round"/><g transform="translate(10 148)"><path fill="#fff" d="M11.4 3.9l9.9 8.6-1 1.2-1.2-1V22h-5.2v-5.6h-5v5.6H3.8V12.7l-1.2 1-1-1.2z"/></g><path d="M120.1 158.9l6.6 6.6 6.6-6.6" stroke="#cdd2d5" stroke-width="2" fill="none" stroke-linecap="round" stroke-linejoin="round"/><g transform="translate(10 183)"><circle cx="11.5" cy="9.6" r="4.6" stroke="#fff" stroke-width="2" fill="none"/><path d="M11.5 14.2v7.5M8.2 18.6h6.6" stroke="#fff" stroke-width="1.8"/></g><path d="M120.1 193.9l6.6 6.6 6.6-6.6" stroke="#cdd2d5" stroke-width="2" fill="none" stroke-linecap="round" stroke-linejoin="round"/><g transform="translate(10 218)"><rect x="8.7" y="5.2" width="5.6" height="5" rx="1.6" fill="#fff"/><rect x="1" y="15.8" width="5.6" height="5.4" rx="1.6" fill="#fff"/><rect x="8.7" y="15.8" width="5.6" height="5.4" rx="1.6" fill="#fff"/><rect x="16.1" y="15.8" width="5.6" height="5.4" rx="1.6" fill="#fff"/><path d="M11.5 10v6M3.8 16v-2.6h15.3V16" stroke="#fff" stroke-width="1" fill="none"/></g><path d="M120.1 228.9l6.6 6.6 6.6-6.6" stroke="#cdd2d5" stroke-width="2" fill="none" stroke-linecap="round" stroke-linejoin="round"/><g transform="translate(10 253)"><path fill="#fff" d="M6.2 6.6h3a2.3 2.3 0 0 1 4.6 0h3a1.5 1.5 0 0 1 1.5 1.5v12.6a1.5 1.5 0 0 1-1.5 1.5H6.2a1.5 1.5 0 0 1-1.5-1.5V8.1a1.5 1.5 0 0 1 1.5-1.5z"/><circle cx="11.5" cy="6.8" r=".9" fill="#37474f"/><path d="M7.8 14.4l2.6 2.5 5-5" stroke="#37474f" stroke-width="1.7" fill="none"/></g><path d="M120.1 263.9l6.6 6.6 6.6-6.6" stroke="#cdd2d5" stroke-width="2" fill="none" stroke-linecap="round" stroke-linejoin="round"/><g transform="translate(10 288)"><ellipse cx="11.6" cy="7.6" rx="8.1" ry="3.2" fill="#fff"/><path fill="#fff" d="M3.5 9.6c1.6 1.6 4.6 2.4 8.1 2.4s6.5-.8 8.1-2.4v3.2c0 1.7-3.6 3.1-8.1 3.1s-8.1-1.4-8.1-3.1z"/><path fill="#fff" d="M3.5 15.2c1.6 1.6 4.6 2.4 8.1 2.4s6.5-.8 8.1-2.4v4.1c0 1.8-3.6 3.2-8.1 3.2s-8.1-1.4-8.1-3.2z"/></g><path d="M120.1 298.9l6.6 6.6 6.6-6.6" stroke="#cdd2d5" stroke-width="2" fill="none" stroke-linecap="round" stroke-linejoin="round"/><g transform="translate(10 323)"><circle cx="11.45" cy="13.3" r="8.85" fill="#fff"/><path d="M2.6 11.4h17.7M2.6 15.3h17.7" stroke="#37474f" stroke-width="1"/><ellipse cx="11.45" cy="13.3" rx="3.8" ry="8.85" stroke="#37474f" stroke-width="1" fill="none"/></g><path d="M120.1 338.2l6.6-6.6 6.6 6.6" stroke="#cdd2d5" stroke-width="2" fill="none" stroke-linecap="round" stroke-linejoin="round"/><g transform="translate(10 358)"><path fill="#f3dc4e" d="M23.8 4.5a6 6 0 0 0-6 6c0 4 6 10.5 6 10.5s6-6.5 6-10.5a6 6 0 0 0-6-6zm0 3.6a2.3 2.3 0 1 1 0 4.6 2.3 2.3 0 0 1 0-4.6z"/></g><g transform="translate(10 393)"><path d="M15 9.5h11c2 0 2-3 0-3M15 13h14c2 0 2 3.5 0 3.5M17 16.5h6c2 0 2 3 0 3" stroke="#fff" stroke-width="1.6" fill="none" stroke-linecap="round"/><path d="M15 11.2h9" stroke="#fff" stroke-width="1.6"/></g><g transform="translate(10 428)"><path d="M11.6 6v15.6M4.5 6.2h14.2M4.5 22h14.2" stroke="#fff" stroke-width="1.7"/><circle cx="11.6" cy="6.2" r="1.5" fill="#fff"/><path fill="#fff" d="M5 8l-4.3 8c0 2 2 3 4.3 3s4.3-1 4.3-3zm0 2.4l2.7 5.3H2.3z"/><path fill="#fff" d="M18.3 8l-4.3 8c0 2 2 3 4.3 3s4.3-1 4.3-3zm0 2.4l2.7 5.3h-5.4z"/></g><path d="M120.1 438.9l6.6 6.6 6.6-6.6" stroke="#cdd2d5" stroke-width="2" fill="none" stroke-linecap="round" stroke-linejoin="round"/><g transform="translate(10 463)"><path fill="#fff" d="M10.99 9.41 L10.99 12.39 L9.21 12.76 L9.12 12.92 L9.69 14.65 L7.10 16.14 L5.89 14.79 L5.71 14.79 L4.50 16.14 L1.91 14.65 L2.48 12.92 L2.39 12.76 L0.61 12.39 L0.61 9.41 L2.39 9.04 L2.48 8.88 L1.91 7.15 L4.50 5.66 L5.71 7.01 L5.89 7.01 L7.10 5.66 L9.69 7.15 L9.12 8.88 L9.21 9.04Z"/><circle cx="5.8" cy="10.9" r="1.73" fill="#37474f"/><path fill="#fff" d="M21.87 15.07 L21.87 18.33 L19.93 18.74 L19.83 18.91 L20.45 20.80 L17.62 22.43 L16.30 20.95 L16.10 20.95 L14.78 22.43 L11.95 20.80 L12.57 18.91 L12.47 18.74 L10.53 18.33 L10.53 15.07 L12.47 14.66 L12.57 14.49 L11.95 12.60 L14.78 10.97 L16.10 12.45 L16.30 12.45 L17.62 10.97 L20.45 12.60 L19.83 14.49 L19.93 14.66Z"/><circle cx="16.2" cy="16.7" r="1.89" fill="#37474f"/></g><path d="M120.1 473.9l6.6 6.6 6.6-6.6" stroke="#cdd2d5" stroke-width="2" fill="none" stroke-linecap="round" stroke-linejoin="round"/><g transform="translate(10 498)"><line x1="5.6" y1="19.8" x2="8.8" y2="16.8" stroke="#fff" stroke-width="5" stroke-linecap="round"/><line x1="8.8" y1="16.8" x2="15.2" y2="10.8" stroke="#fff" stroke-width="1.4"/><line x1="15.4" y1="10.4" x2="18.2" y2="7.6" stroke="#fff" stroke-width="3.6" stroke-linecap="round"/></g><path d="M120.1 508.9l6.6 6.6 6.6-6.6" stroke="#cdd2d5" stroke-width="2" fill="none" stroke-linecap="round" stroke-linejoin="round"/><g transform="translate(10 533)"><path d="M3.6 6.2v14.5h16.7" stroke="#fff" stroke-width="1.9" fill="none" stroke-linecap="round"/><path d="M7.4 9.6h7.8M7.4 12.6h5M7.4 15.9h10.1" stroke="#fff" stroke-width="1.9" stroke-linecap="round"/></g><path d="M120.1 543.9l6.6 6.6 6.6-6.6" stroke="#cdd2d5" stroke-width="2" fill="none" stroke-linecap="round" stroke-linejoin="round"/><g transform="translate(10 568)"><path d="M5.2 12.4a6.4 6.4 0 0 1 11.4-3.6" stroke="#4caf50" stroke-width="2.5" fill="none"/><path fill="#4caf50" d="M20 6v6.2h-6.2z"/><path d="M18 15.3a6.4 6.4 0 0 1-11.4 3.6" stroke="#4caf50" stroke-width="2.5" fill="none"/><path fill="#4caf50" d="M3.2 21.7v-6.2h6.2z"/></g><g transform="translate(10 614)"><rect x="2.7" y="11.2" width="3.2" height="8.5" rx=".6" fill="#fff"/><path d="M8 12.2l3.4-3.6c.6-.9.4-2.6 1.4-3.3 1.3-.5 2.2.7 1.9 2l-.9 3.5h4.5c1.5 0 2.2 1.5 1.6 2.6l-2.6 5.2c-.5.9-1.2 1.3-2.2 1.3H8" stroke="#fff" stroke-width="1.4" fill="none" stroke-linejoin="round"/></g><g transform="translate(10 659)"><circle cx="11.5" cy="12.5" r="8.8" fill="#4caf50"/></g><g transform="translate(10 694)"><path d="M8 6.5H5.2c-.9 0-1.5.6-1.5 1.5v9.6c0 .9.6 1.5 1.5 1.5H8" stroke="#fff" stroke-width="1.8" fill="none"/><path fill="#fff" d="M7.6 10.6h5.5V7.2l6.5 5.6-6.5 5.6v-3.4H7.6z"/></g></svg><div class="sl" style="left:42px;top:49.5px;color:#f2f2f2">Kalender</div><div class="sl" style="left:42px;top:84.5px;color:#f2f2f2">Quicktool</div><div class="sl" style="left:42px;top:119.5px;color:#f2f2f2">Aufgaben</div><div class="sl" style="left:42px;top:154.5px;color:#f2f2f2">Völker</div><div class="sl" style="left:42px;top:189.5px;color:#f2f2f2">Königinnen</div><div class="sl" style="left:42px;top:224.5px;color:#f2f2f2">Königin Zucht</div><div class="sl" style="left:42px;top:259.5px;color:#f2f2f2">ToDo's</div><div class="sl" style="left:42px;top:294.5px;color:#f2f2f2">Chargen</div><div class="sl" style="left:42px;top:329.5px;color:#f2f2f2">Karten</div><div class="sl" style="left:54px;top:364.5px;color:#f3dc4e">Stand</div><div class="sl" style="left:54px;top:399.5px;color:#f2f2f2">Wind</div><div class="sl" style="left:42px;top:434.5px;color:#f2f2f2">Waagen</div><div class="sl" style="left:42px;top:469.5px;color:#f2f2f2">Einstellungen</div><div class="sl" style="left:42px;top:504.5px;color:#f2f2f2">Werkzeuge</div><div class="sl" style="left:42px;top:539.5px;color:#f2f2f2">Statistiken</div><div class="sl" style="left:42px;top:574.5px;color:#4caf50">Daten aktualisieren</div><div class="sl" style="left:42px;top:605.7px;color:#f2f2f2">Bezahlt: 2027-01-11</div><div class="sl" style="left:42px;top:620.5px;color:#f2f2f2">Status: Premium</div><div class="sl" style="left:42px;top:635.3px;color:#f2f2f2">Rang: Admin</div><div class="sl" style="left:42px;top:665.5px;color:#f2f2f2">Online</div><div class="sl" style="left:42px;top:700.5px;color:#f2f2f2">Ausloggen</div><div class="sdiv" style="top:317px"></div><div class="sdiv" style="top:422px"></div></div>
  </div>
  <div class="map"><svg style="position:absolute;left:150px;top:40.4px" width="846.4" height="634.6" viewBox="325 178.2 423.2 317.3" preserveAspectRatio="none"><defs><filter id="b12" x="-60%" y="-60%" width="220%" height="220%"><feGaussianBlur stdDeviation="14"/></filter><filter id="b2" x="-60%" y="-60%" width="220%" height="220%"><feGaussianBlur stdDeviation="1.6"/></filter><filter id="b1" x="-60%" y="-60%" width="220%" height="220%"><feGaussianBlur stdDeviation="1.2"/></filter><filter id="nz1" x="0" y="0" width="100%" height="100%"><feTurbulence type="fractalNoise" baseFrequency=".35" numOctaves="3" seed="7"/><feColorMatrix type="matrix" values="0 0 0 0 .38  0 0 0 0 .44  0 0 0 0 .22  3.2 0 0 0 -1.7"/></filter><filter id="nz2" x="0" y="0" width="100%" height="100%"><feTurbulence type="fractalNoise" baseFrequency=".24" numOctaves="4" seed="21"/><feColorMatrix type="matrix" values="0 0 0 0 .11  0 0 0 0 .14  0 0 0 0 .07  -4 0 0 0 2.3"/></filter><filter id="rough" x="-50%" y="-50%" width="200%" height="200%"><feTurbulence type="fractalNoise" baseFrequency=".35" numOctaves="2" seed="3" result="t"/><feDisplacementMap in="SourceGraphic" in2="t" scale="6" xChannelSelector="R" yChannelSelector="G" result="d"/><feGaussianBlur in="d" stdDeviation="1"/></filter><filter id="wig" x="-20%" y="-20%" width="140%" height="140%"><feTurbulence type="fractalNoise" baseFrequency=".08" numOctaves="2" seed="9" result="t"/><feDisplacementMap in="SourceGraphic" in2="t" scale="6" xChannelSelector="R" yChannelSelector="G" result="d"/><feGaussianBlur in="d" stdDeviation=".8"/></filter><filter id="vein" x="0" y="0" width="100%" height="100%"><feGaussianBlur in="SourceGraphic" stdDeviation="8" result="s"/><feTurbulence type="turbulence" baseFrequency=".09 .16" numOctaves="2" seed="5" result="t"/><feColorMatrix in="t" type="matrix" values="0 0 0 0 0  0 0 0 0 0  0 0 0 0 0  3.5 0 0 0 -.55" result="m"/><feComposite in="s" in2="m" operator="in"/></filter></defs><rect x="325" y="178" width="424" height="318" fill="#3a4629"/><g filter="url(#b12)"><rect x="319" y="172" width="65" height="65" fill="rgb(46, 60, 34)"/><rect x="372" y="172" width="65" height="65" fill="rgb(42, 56, 30)"/><rect x="425" y="172" width="65" height="65" fill="rgb(45, 58, 32)"/><rect x="478" y="172" width="65" height="65" fill="rgb(42, 56, 30)"/><rect x="531" y="172" width="65" height="65" fill="rgb(37, 50, 26)"/><rect x="584" y="172" width="65" height="65" fill="rgb(37, 50, 26)"/><rect x="637" y="172" width="65" height="65" fill="rgb(39, 52, 28)"/><rect x="690" y="172" width="65" height="65" fill="rgb(42, 55, 30)"/><rect x="319" y="225" width="65" height="65" fill="rgb(54, 64, 40)"/><rect x="372" y="225" width="65" height="65" fill="rgb(50, 60, 38)"/><rect x="425" y="225" width="65" height="65" fill="rgb(47, 56, 34)"/><rect x="478" y="225" width="65" height="65" fill="rgb(42, 56, 30)"/><rect x="531" y="225" width="65" height="65" fill="rgb(39, 52, 28)"/><rect x="584" y="225" width="65" height="65" fill="rgb(45, 58, 32)"/><rect x="637" y="225" width="65" height="65" fill="rgb(42, 56, 30)"/><rect x="690" y="225" width="65" height="65" fill="rgb(52, 62, 36)"/><rect x="319" y="278" width="65" height="65" fill="rgb(49, 60, 34)"/><rect x="372" y="278" width="65" height="65" fill="rgb(58, 60, 38)"/><rect x="425" y="278" width="65" height="65" fill="rgb(58, 60, 36)"/><rect x="478" y="278" width="65" height="65" fill="rgb(49, 58, 32)"/><rect x="531" y="278" width="65" height="65" fill="rgb(42, 56, 30)"/><rect x="584" y="278" width="65" height="65" fill="rgb(42, 56, 30)"/><rect x="637" y="278" width="65" height="65" fill="rgb(49, 60, 34)"/><rect x="690" y="278" width="65" height="65" fill="rgb(54, 62, 38)"/><rect x="319" y="331" width="65" height="65" fill="rgb(64, 68, 48)"/><rect x="372" y="331" width="65" height="65" fill="rgb(54, 58, 36)"/><rect x="425" y="331" width="65" height="65" fill="rgb(49, 56, 32)"/><rect x="478" y="331" width="65" height="65" fill="rgb(45, 56, 32)"/><rect x="531" y="331" width="65" height="65" fill="rgb(34, 46, 24)"/><rect x="584" y="331" width="65" height="65" fill="rgb(49, 60, 36)"/><rect x="637" y="331" width="65" height="65" fill="rgb(58, 66, 40)"/><rect x="690" y="331" width="65" height="65" fill="rgb(55, 64, 38)"/><rect x="319" y="384" width="65" height="65" fill="rgb(42, 54, 30)"/><rect x="372" y="384" width="65" height="65" fill="rgb(49, 58, 34)"/><rect x="425" y="384" width="65" height="65" fill="rgb(54, 60, 38)"/><rect x="478" y="384" width="65" height="65" fill="rgb(45, 56, 32)"/><rect x="531" y="384" width="65" height="65" fill="rgb(30, 42, 22)"/><rect x="584" y="384" width="65" height="65" fill="rgb(37, 50, 27)"/><rect x="637" y="384" width="65" height="65" fill="rgb(58, 64, 40)"/><rect x="690" y="384" width="65" height="65" fill="rgb(62, 66, 42)"/><rect x="319" y="437" width="65" height="65" fill="rgb(42, 52, 32)"/><rect x="372" y="437" width="65" height="65" fill="rgb(52, 56, 40)"/><rect x="425" y="437" width="65" height="65" fill="rgb(39, 50, 28)"/><rect x="478" y="437" width="65" height="65" fill="rgb(37, 48, 26)"/><rect x="531" y="437" width="65" height="65" fill="rgb(35, 46, 25)"/><rect x="584" y="437" width="65" height="65" fill="rgb(42, 52, 30)"/><rect x="637" y="437" width="65" height="65" fill="rgb(49, 58, 35)"/><rect x="690" y="437" width="65" height="65" fill="rgb(54, 60, 38)"/></g><rect x="325" y="178" width="424" height="318" filter="url(#nz2)" opacity=".7"/><rect x="325" y="178" width="424" height="318" filter="url(#nz1)" opacity=".2"/><g filter="url(#vein)" opacity=".6"><rect x="325" y="178" width="424" height="318" fill="none"/><ellipse cx="440" cy="318" rx="80" ry="16" fill="#7e6a4a"/><ellipse cx="400" cy="365" rx="35" ry="22" fill="#7a6a4a"/><ellipse cx="340" cy="360" rx="16" ry="26" fill="#9a9078"/><ellipse cx="470" cy="410" rx="35" ry="25" fill="#7e7048"/><ellipse cx="690" cy="400" rx="60" ry="45" fill="#807852"/><ellipse cx="730" cy="290" rx="18" ry="45" fill="#807650"/><ellipse cx="590" cy="250" rx="40" ry="20" fill="#6c6444"/><ellipse cx="400" cy="480" rx="30" ry="14" fill="#8a8470"/></g><g filter="url(#wig)" fill="none" stroke-linecap="round" stroke-linejoin="round"><path d="M325 288 C360 282 400 268 452 256 S510 268 537 275 L592 277 643 246 685 229 698 206" stroke="#5e7845" stroke-width="3" opacity=".8"/><path d="M560 300 L592 277 643 246" stroke="#7b7a55" stroke-width="2" opacity=".6"/><path d="M333 390 L401 437 462 437 500 445" stroke="#5d6e45" stroke-width="2" opacity=".75"/><path d="M607 343 L618 380 630 411 685 418 728 447 749 452" stroke="#7e7852" stroke-width="2.4" opacity=".75"/><path d="M647 337 L664 371 705 373 749 375" stroke="#7e7852" stroke-width="2.2" opacity=".75"/><path d="M586 354 L606 378 626 396 M575 372 L610 392 M583 398 L630 411 M600 420 L630 411 M640 380 L650 405 M660 385 L668 410 M680 380 L690 410 M700 345 L706 372 M720 340 L728 373 M740 350 L749 360" stroke="#7a7452" stroke-width="1.8" opacity=".7"/><path d="M700 420 L740 440 M690 430 L720 455 M650 425 L670 445 L700 470 M600 480 L640 475 L680 470" stroke="#74704c" stroke-width="1.6" opacity=".7"/></g><g filter="url(#rough)" fill="#7a724e" opacity=".55"><rect x="715" y="240" width="14" height="10"/><rect x="732" y="262" width="12" height="18"/><rect x="718" y="290" width="10" height="12"/><rect x="735" y="300" width="12" height="14"/><rect x="705" y="318" width="12" height="10"/><rect x="728" y="325" width="14" height="10"/><rect x="700" y="395" width="20" height="14"/><rect x="725" y="410" width="18" height="12"/><rect x="705" y="430" width="22" height="12"/><rect x="690" y="445" width="18" height="10"/></g><g filter="url(#rough)" fill="#25311c" opacity=".6"><rect x="722" y="250" width="10" height="10"/><rect x="708" y="270" width="9" height="14"/><rect x="738" y="285" width="9" height="12"/><rect x="722" y="305" width="9" height="14"/></g><g filter="url(#rough)" opacity=".7"><path fill="#cdc6b8" d="M421 224 L430 222 433 228 429 237 425 240 421 235 419 229z"/><path fill="#b5ad9c" d="M398 222 L406 224 404 232 397 230z"/><path fill="#d0cabe" d="M365 264 L372 262 379 265 377 271 370 273 365 271z"/><path fill="#a39a86" d="M325 255 L332 256 331 268 325 266z"/><path fill="#8e8672" d="M446 234 L455 236 453 242 445 241z"/><path fill="#8e8672" d="M476 232 L486 234 484 240 475 239z"/><path fill="#8e8672" d="M498 239 L506 240 504 246 497 245z"/><path fill="#d2ccc0" d="M329 354 L336 355 335 363 329 362z"/><path fill="#cfc9bc" d="M394 477 L400 476 403 481 407 485 404 491 397 492 393 487z"/><path fill="#c8c2b4" d="M499 360 L502 361 507 372 506 386 504 386 503 374 498 363z"/><path fill="#c6c2b6" d="M538 346 L546 349 549 360 540 358z"/><path fill="#8a8068" d="M396 434 L406 433 408 442 398 443z"/><path fill="#8a8068" d="M458 432 L468 431 469 440 459 440z"/><path fill="#2c6365" d="M438 436 L452 434 455 437 440 439z"/></g><g filter="url(#b1)"><path d="M365 178 C363 186 361 196 357 203 352 206 346 210 340 214" stroke="#2f6c72" stroke-width="3" fill="none"/><path d="M394 186 L393 200" stroke="#1d3f43" stroke-width="2.6" fill="none"/><circle cx="590" cy="222" r="1.1" fill="#e8e8e8"/><circle cx="708" cy="265" r="1.1" fill="#e8e8e8"/><circle cx="704" cy="262" r="1.1" fill="#e8e8e8"/><circle cx="712" cy="270" r="1.1" fill="#e8e8e8"/><circle cx="524" cy="302" r="1.1" fill="#e8e8e8"/><circle cx="365" cy="387" r="1.1" fill="#e8e8e8"/><circle cx="374" cy="386" r="1.1" fill="#e8e8e8"/><circle cx="432" cy="395" r="1.1" fill="#e8e8e8"/><circle cx="500" cy="420" r="1.1" fill="#e8e8e8"/><circle cx="512" cy="432" r="1.1" fill="#e8e8e8"/><circle cx="341" cy="245" r="1.1" fill="#e8e8e8"/><circle cx="462" cy="209" r="1.1" fill="#e8e8e8"/><circle cx="620" cy="196" r="1.1" fill="#e8e8e8"/><circle cx="582" cy="203" r="1.1" fill="#e8e8e8"/><circle cx="640" cy="266" r="1.1" fill="#e8e8e8"/><circle cx="703" cy="352" r="1.1" fill="#e8e8e8"/><circle cx="705" cy="357" r="1.1" fill="#e8e8e8"/><circle cx="707" cy="364" r="1.1" fill="#e8e8e8"/><circle cx="343" cy="422" r="1.1" fill="#e8e8e8"/><circle cx="340" cy="444" r="1.1" fill="#e8e8e8"/><circle cx="345" cy="446" r="1.1" fill="#e8e8e8"/><circle cx="358" cy="465" r="1.1" fill="#e8e8e8"/></g><circle cx="546.7" cy="317.4" r="2.4" fill="none" stroke="#0a9a1a" stroke-width="1.3"/><path fill="#3d8fdc" d="M547 316.6L543.1 309.2A4.4 4.4 0 1 1 550.9 309.2z"/><circle cx="547" cy="307" r="1.5" fill="#fff"/><circle cx="536.7" cy="337.7" r="2.4" fill="none" stroke="#0a9a1a" stroke-width="1.3"/><path fill="#3d8fdc" d="M537 336.90000000000003L533.1 329.5A4.4 4.4 0 1 1 540.9 329.5z"/><circle cx="537" cy="327.3" r="1.5" fill="#fff"/><path d="M670 479.6h18" stroke="#e5622a" stroke-width="1.2"/><circle cx="688.5" cy="479.6" r="2.6" fill="#e5622a"/></svg><div style="position:absolute;left:158px;top:47.8px;width:22.4px;height:44.4px;background:#fff;border-radius:2px"></div><div style="position:absolute;left:158px;top:69.6px;width:22.4px;height:1px;background:#ddd"></div><svg style="position:absolute;left:158px;top:47.8px" width="23" height="45" viewBox="0 0 23 45"><path d="M11.4 6.8v10M6.4 11.8h10M6.6 33.2h9.6" stroke="#222" stroke-width="2.4"/></svg><div style="position:absolute;left:896.4px;top:47.8px;width:91.6px;height:77px;background:#fff;border-radius:3px;box-shadow:0 1px 2px rgba(0,0,0,.3)"></div><div style="position:absolute;left:900px;top:87px;width:84px;height:1px;background:#ddd"></div><svg style="position:absolute;left:896.4px;top:47.8px" width="92" height="77" viewBox="0 0 92 77"><circle cx="8.8" cy="12.2" r="4" fill="#fff" stroke="#888" stroke-width="1"/><circle cx="8.8" cy="27.4" r="4" fill="#1b73e8"/><circle cx="8.8" cy="27.4" r="1.6" fill="#3d8af0"/><rect x="4.6" y="46" width="8.4" height="8.4" rx="1.2" fill="#fff" stroke="#888" stroke-width="1"/><rect x="4.6" y="60.8" width="8.4" height="8.4" rx="1.2" fill="#fff" stroke="#888" stroke-width="1"/></svg><div class="lc" style="left:913.4px;top:54px">OpenStreetMap</div><div class="lc" style="left:913.4px;top:69.2px">Esri</div><div class="lc" style="left:913.4px;top:92px">Perception</div><div class="lc" style="left:913.4px;top:106.8px">Temperature</div><svg style="position:absolute;left:150px;top:630px" width="120" height="40" viewBox="325 473 60 20"><circle cx="335.5" cy="485.5" r="7.2" fill="#fff"/><circle cx="350.5" cy="485.5" r="7.2" fill="#fff"/><circle cx="365" cy="485.5" r="7.2" fill="#fff"/><path fill="#111" d="M335.5 490.3l-2.6-4.2a3 3 0 1 1 5.2 0z"/><circle cx="335.5" cy="484.4" r="1" fill="#fff"/><path d="M346 485.5c1.3-2.2 2.8-3.2 4.5-3.2s3.2 1 4.5 3.2c-1.3 2.2-2.8 3.2-4.5 3.2s-3.2-1-4.5-3.2z" fill="#111"/><circle cx="350.5" cy="485.5" r="1.6" fill="#fff"/><path fill="#111" d="M361.2 481.4h7.4v2.2h-7.4zM360.2 484.2h9.6v3.6h-9.6zM361.6 487h6.8v2.4h-6.8z"/><path fill="#fff" d="M362.6 486.4h4.8v1.4h-4.8z"/></svg><div style="position:absolute;left:856px;top:612.6px;width:68.6px;height:17.4px;background:#e5622a;border-radius:2px"></div><svg style="position:absolute;left:868px;top:629.5px" width="12" height="6" viewBox="0 0 12 6"><path fill="#e5622a" d="M2 0h8l-4 4.5z"/></svg><div style="position:absolute;left:856px;top:615px;width:68.6px;text-align:center;font-size:9px;color:#fff;line-height:12px">Radius 1000m</div><div style="position:absolute;left:478.2px;top:664px;width:518.2px;height:10.8px;background:rgba(255,255,255,.82)"></div><div style="position:absolute;left:481px;top:664.6px;font-size:8.6px;line-height:10px;color:#333;white-space:nowrap;letter-spacing:-.1px;text-rendering:geometricPrecision;font-family:Liberation Sans,sans-serif"><span style="display:inline-block;width:12px;height:7px;background:linear-gradient(#3a6fb5 50%,#f5d000 50%);vertical-align:-1px"></span> <span style="color:#2d7bbf">Leaflet</span> | © <span style="color:#2d7bbf">Esri</span>, i-cubed, USDA, USGS, AEX, GeoEye, Getmapping, Aerogrid, IGN, IGP, UPR-EGP, and the GIS User Community</div></div>
  <div class="foot" style="top:724px;height:26px;left:146px;width:854px"><div style="position:absolute;left:0;top:0;width:852px;height:26px"><div style="position:absolute;left:9px;top:7.9px;font-size:10px;color:#e6e6e6;line-height:12px">Version: 6.0.8</div><div style="position:absolute;left:389.5px;top:7.9px;font-size:10.2px;font-weight:bold;color:#eee;line-height:12px">b.tree</div><svg style="position:absolute;left:0;top:0" width="852" height="27" viewBox="0 0 852 27"><circle cx="756" cy="13.7" r="6.2" fill="#fff"/><text x="756" y="17.1" font-size="9" font-weight="bold" text-anchor="middle" fill="#616161" font-family="Liberation Sans">?</text><path d="M790.4 20.3C785.6 16.8 785.6 10.1 790.7 6.8L797.1 13.3M797.7 6.8C802.6 10.1 802.6 16.8 798 20.3L791.3 13.9" stroke="#a6a6a6" stroke-width="1.7" fill="none" stroke-linecap="round" stroke-linejoin="round"/></svg><div style="position:absolute;left:817.4px;top:7.9px;font-size:10px;color:#e6e6e6;line-height:12px">Teilen</div></div></div>
 </div>
</div>
</body></html>
